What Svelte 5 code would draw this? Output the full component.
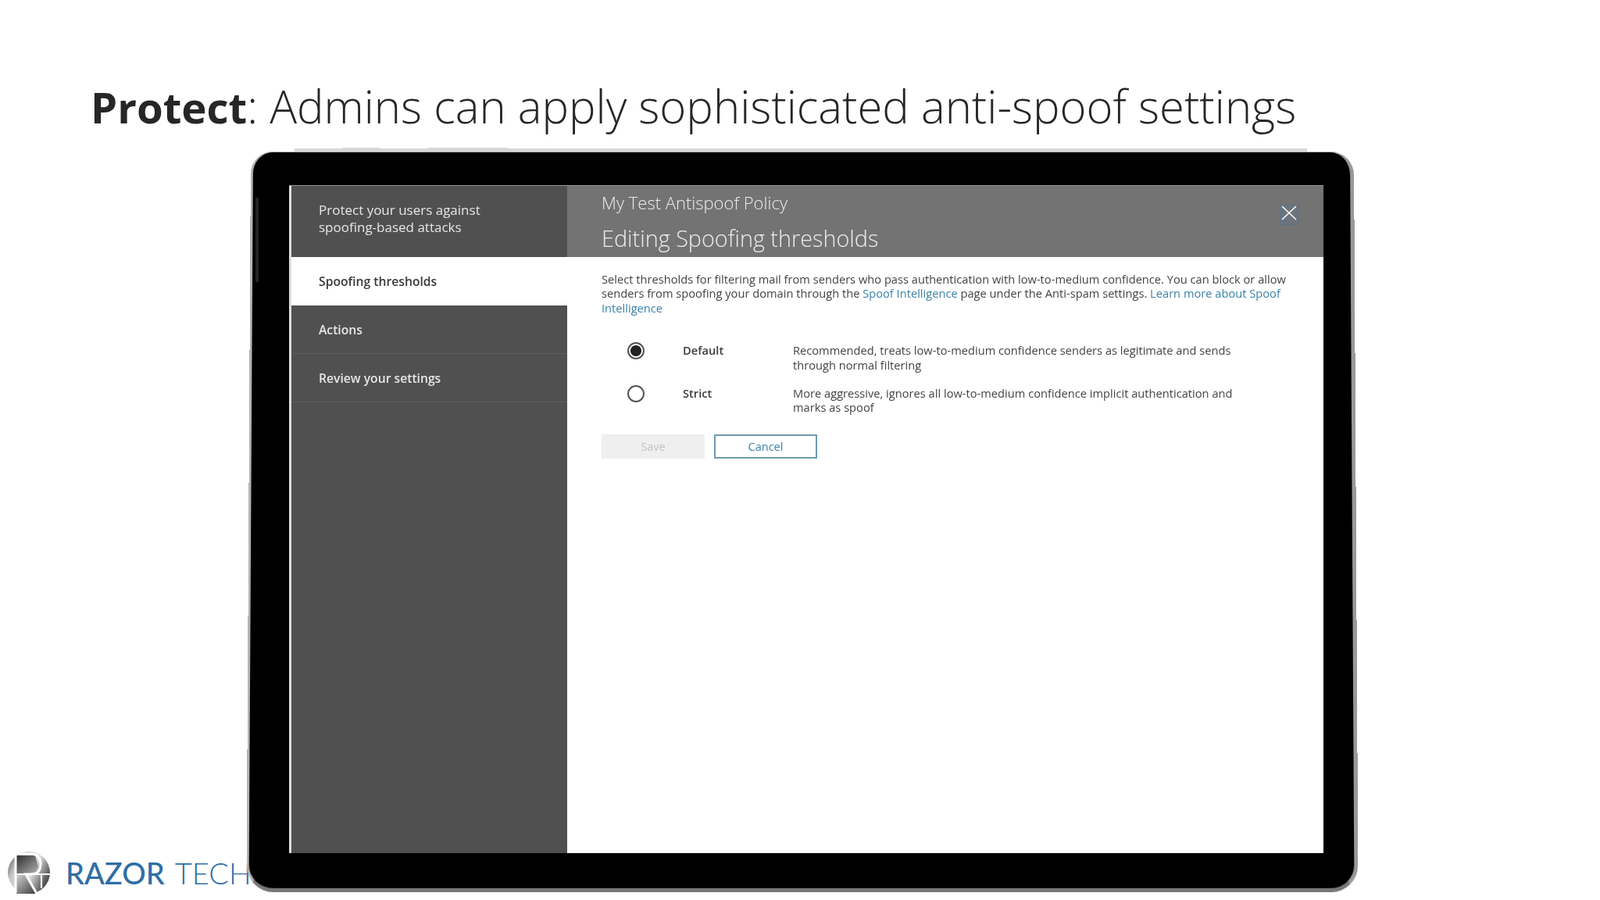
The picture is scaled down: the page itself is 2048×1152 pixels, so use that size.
<script>
  let level = "default";

  const steps = [
    { label: "Spoofing thresholds", active: true },
    { label: "Actions", active: false },
    { label: "Review your settings", active: false }
  ];

  const options = [
    {
      id: "default",
      name: "Default",
      text: "Recommended, treats low-to-medium confidence senders as legitimate and sends through normal filtering"
    },
    {
      id: "strict",
      name: "Strict",
      text: "More aggressive, ignores all low-to-medium confidence implicit authentication and marks as spoof"
    }
  ];
</script>

<main class="slide">
  <h1><b>Protect</b>: Admins can apply sophisticated anti-spoof settings</h1>

  <div class="brand">
    <svg class="brand-mark" viewBox="0 0 56 56" aria-hidden="true">
      <defs>
        <linearGradient id="steel" x1="0" y1="0" x2="1" y2="0.5">
          <stop offset="0" stop-color="#444" />
          <stop offset="0.3" stop-color="#c8c8c8" />
          <stop offset="0.65" stop-color="#e0e0e0" />
          <stop offset="1" stop-color="#555" />
        </linearGradient>
        <linearGradient id="wedge" x1="0" y1="0" x2="1" y2="1">
          <stop offset="0" stop-color="#2e2e2e" />
          <stop offset="1" stop-color="#b0b0b0" />
        </linearGradient>
        <linearGradient id="foot" x1="0" y1="0" x2="1" y2="1">
          <stop offset="0" stop-color="#d0d0d0" />
          <stop offset="1" stop-color="#3a3a3a" />
        </linearGradient>
      </defs>
      <circle cx="28" cy="28" r="27" fill="url(#steel)" />
      <path d="M12 6h24l4 14-4 9H12z" fill="url(#wedge)" />
      <path d="M12 31h14l12 24H12z" fill="url(#foot)" />
      <path d="M11 54V4h19q13 0 13 13t-13 13H24l14 25" fill="none" stroke="#fff" stroke-width="3" />
      <path d="M11 30h44M44 30v18" fill="none" stroke="#fff" stroke-width="2.2" />
    </svg>
    <span class="brand-name"><b>RAZOR</b> TECH</span>
  </div>

  <div class="device">
    <span class="rim-line"></span>
    <span class="rim-button first"></span>
    <span class="rim-button second"></span>
    <span class="side-key"></span>
    <div class="screen">
      <aside class="sidebar">
        <p class="intro">Protect your users against<br />spoofing-based attacks</p>
        {#each steps as step}
          <div class="step" class:active={step.active}>{step.label}</div>
        {/each}
      </aside>

      <section class="panel">
        <header class="panel-head">
          <div>
            <div class="policy">My Test Antispoof Policy</div>
            <h2>Editing Spoofing thresholds</h2>
          </div>
          <button class="close" aria-label="Close">
            <svg viewBox="0 0 20 20" width="20" height="20">
              <path d="M1 1l18 17M19 1L1 18" stroke="#fff" stroke-width="1.5" fill="none" />
            </svg>
          </button>
        </header>

        <div class="panel-body">
          <p class="lead">
            Select thresholds for filtering mail from senders who pass authentication with low-to-medium confidence. You can block or allow senders from spoofing your domain through the <span class="link">Spoof Intelligence</span> page under the Anti-spam settings. <span class="link">Learn more about Spoof Intelligence</span>
          </p>

          <div class="options">
            {#each options as opt}
              <div class="option">
                <button
                  class="radio"
                  class:on={level === opt.id}
                  aria-label={opt.name}
                  on:click={() => (level = opt.id)}
                ></button>
                <strong>{opt.name}</strong>
                <span class="desc">{opt.text}</span>
              </div>
            {/each}
          </div>

          <div class="actions">
            <button class="btn save" disabled>Save</button>
            <button class="btn cancel">Cancel</button>
          </div>
        </div>
      </section>
    </div>
  </div>
</main>

<style>
  :global(body) {
    margin: 0;
    background: #fff;
  }

  .slide {
    position: relative;
    width: 2048px;
    height: 1152px;
    overflow: hidden;
    background: #fff;
    padding-top: 97px;
    box-sizing: border-box;
  }

  h1 {
    margin: 0 0 0 116px;
    font-family: "Open Sans", sans-serif;
    font-weight: 300;
    font-size: 58px;
    line-height: 78px;
    color: #262626;
    white-space: nowrap;
  }

  h1 b {
    font-weight: 700;
    font-size: 54.5px;
  }

  .brand {
    position: absolute;
    left: 9px;
    bottom: 7px;
    display: flex;
    align-items: center;
    gap: 19px;
    color: #2f6ea6;
    font-family: Lato, sans-serif;
    font-size: 38px;
    font-weight: 300;
    white-space: nowrap;
  }

  .brand-mark {
    width: 56px;
    height: 56px;
  }

  .brand-name b {
    font-weight: 500;
    margin-right: 4px;
  }

  .device {
    position: relative;
    box-sizing: border-box;
    width: 1412px;
    height: 947px;
    margin: 18px 0 0 321px;
    padding: 44px 39px 49px 49px;
  }

  /* the photo of the tablet is slightly wider at the bottom */
  .device::before {
    content: "";
    position: absolute;
    top: 0;
    left: 0;
    right: 0;
    height: 941px;
    box-sizing: border-box;
    background: #000;
    border: solid #b4b4b4;
    border-width: 1px 5px 5px 3px;
    border-bottom-color: #777;
    border-right-color: #999;
    border-radius: 28px 30px 34px 34px;
    transform-origin: top center;
    transform: perspective(4000px) rotateX(1.9deg);
  }

  .rim-line {
    position: absolute;
    top: -4px;
    left: 56px;
    width: 1296px;
    height: 4px;
    background: #d9d9d9;
  }

  .rim-button {
    position: absolute;
    top: -5px;
    height: 5px;
    background: #d6d6d6;
    border-radius: 3px 3px 0 0;
  }

  .rim-button.first {
    left: 116px;
    width: 50px;
  }

  .rim-button.second {
    left: 226px;
    width: 104px;
  }

  .side-key {
    position: absolute;
    left: 6px;
    top: 59px;
    width: 4px;
    height: 108px;
    background: #242424;
    z-index: 1;
  }

  .screen {
    position: relative;
    display: flex;
    height: 100%;
    background: #fff;
    border-left: 3px solid #ddd;
    box-shadow: 0 -1px 0 #999;
    font-family: "Open Sans", sans-serif;
    filter: blur(0.45px);
  }

  .sidebar {
    width: 353px;
    flex: none;
    background: #505050;
    color: #e6e6e6;
  }

  .intro {
    box-sizing: border-box;
    height: 91px;
    margin: 0;
    padding: 20px 0 0 35px;
    line-height: 22px;
    font-size: 17px;
  }

  .step {
    box-sizing: border-box;
    height: 62px;
    padding-left: 35px;
    display: flex;
    align-items: center;
    font-weight: 600;
    font-size: 15.7px;
    border-bottom: 1px solid #5e5e5e;
  }

  .step.active {
    background: #fff;
    color: #3a3a3a;
    border-bottom: 0;
  }

  .panel {
    flex: 1;
    min-width: 0;
  }

  .panel-head {
    box-sizing: border-box;
    height: 91px;
    background: #737373;
    color: #ececec;
    padding: 8px 32px 0 44px;
    display: flex;
    justify-content: space-between;
    align-items: flex-start;
  }

  .policy {
    font-size: 22px;
    font-weight: 300;
    line-height: 26px;
  }

  h2 {
    margin: 17px 0 0;
    font-size: 28.8px;
    font-weight: 300;
    line-height: 32px;
  }

  .close {
    box-sizing: border-box;
    width: 24px;
    height: 26px;
    margin-top: 16px;
    padding: 0;
    display: flex;
    align-items: flex-start;
    justify-content: center;
    background: #6b747d;
    border: 1px solid #5b7187;
  }

  .panel-body {
    padding: 19px 45px 0 44px;
    font-size: 14.66px;
    line-height: 18.4px;
    color: #444;
  }

  .lead {
    margin: 0;
  }

  .link {
    color: #3b82a8;
  }

  .options {
    margin-top: 36px;
    display: flex;
    flex-direction: column;
    gap: 18px;
  }

  .option {
    display: grid;
    grid-template-columns: 71px 141px 580px;
    padding-left: 33px;
    align-items: start;
  }

  .option strong {
    font-weight: 600;
    color: #3c3c3c;
  }

  .radio {
    box-sizing: border-box;
    width: 22px;
    height: 22px;
    padding: 0;
    border-radius: 50%;
    border: 2px solid #555;
    background: #fff;
    margin-top: -1px;
  }

  .radio.on {
    background: radial-gradient(circle, #222 0 6.5px, #fff 7.5px);
  }

  .actions {
    margin-top: 25px;
    display: flex;
    gap: 12px;
  }

  .btn {
    box-sizing: border-box;
    width: 132px;
    height: 31px;
    font-family: inherit;
    font-size: 14.5px;
    padding: 0;
  }

  .save {
    background: #efefef;
    border: 0;
    color: #c4c4c4;
  }

  .cancel {
    background: #fff;
    border: 2px solid #6f9bb0;
    color: #3b82a8;
  }
</style>
